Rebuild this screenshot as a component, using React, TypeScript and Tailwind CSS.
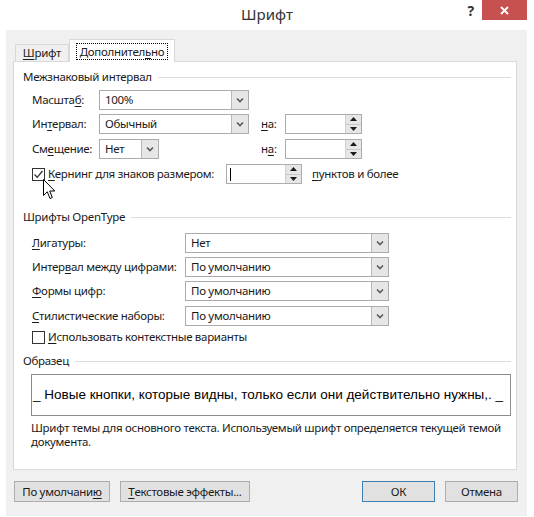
import React from "react";

const U = ({ children }: { children: React.ReactNode }) => (
  <span className="underline underline-offset-[2px] decoration-[1px]">{children}</span>
);

const Chevron = () => (
  <svg width="8" height="6" viewBox="0 0 8 6">
    <polyline points="1,1.5 4,4.5 7,1.5" fill="none" stroke="#5a5a5a" strokeWidth="1.6" />
  </svg>
);

const Select = ({ value, w }: { value: string; w: string }) => (
  <div className={`flex h-full border border-[#acacac] bg-white ${w}`}>
    <div className="flex-1 pl-[5px] flex items-center leading-none whitespace-nowrap">{value}</div>
    <div className="w-[17px] bg-[#e6e6e6] border-l border-[#b8b8b8] flex items-center justify-center">
      <Chevron />
    </div>
  </div>
);

const Spin = ({ w, caret }: { w: string; caret?: boolean }) => (
  <div className={`flex h-full border border-[#acacac] bg-white ${w}`}>
    <div className="flex-1 flex items-center pl-[3px]">
      {caret && <div className="w-px h-[13px] bg-black" />}
    </div>
    <div className="w-[16px] flex flex-col border-l border-[#d0d0d0]">
      <div className="flex-1 bg-[#e6e6e6] border-b border-[#c8c8c8] flex items-center justify-center">
        <svg width="7" height="4" viewBox="0 0 7 4"><polygon points="0,4 7,4 3.5,0" fill="#1a1a1a" /></svg>
      </div>
      <div className="flex-1 bg-[#e6e6e6] flex items-center justify-center">
        <svg width="7" height="4" viewBox="0 0 7 4"><polygon points="0,0 7,0 3.5,4" fill="#1a1a1a" /></svg>
      </div>
    </div>
  </div>
);

const Checkbox = ({ checked }: { checked?: boolean }) => (
  <div className="w-[13px] h-[13px] shrink-0 border border-[#333] bg-white flex items-center justify-center">
    {checked && (
      <svg width="11" height="11" viewBox="0 0 11 11">
        <polyline points="1.5,5.5 4.2,8.3 9.5,2" fill="none" stroke="#333" strokeWidth="1.3" />
      </svg>
    )}
  </div>
);

const Header = ({ text, mt }: { text: string; mt: string }) => (
  <div className={`flex items-center h-[16px] ${mt}`}>
    <span className="whitespace-nowrap">{text}</span>
    <div className="flex-1 h-px bg-[#dcdcdc] ml-[6px]" />
  </div>
);

const Btn = ({ children, w, def }: { children: React.ReactNode; w: string; def?: boolean }) => (
  <div
    className={`h-[21px] ${w} flex items-center justify-center whitespace-nowrap border ${
      def ? "border-[#3c7fb1] bg-[#e1e1e1]" : "border-[#adadad] bg-[#e1e1e1]"
    }`}
  >
    {children}
  </div>
);

export default function App() {
  return (
    <div
      className="relative w-[534px] h-[517px] bg-white text-[11.5px] tracking-[-0.3px] text-[#1a1a1a] overflow-hidden"
      style={{ fontFamily: '"Noto Sans", "Open Sans", sans-serif' }}
    >
      {/* title bar */}
      <div className="grid grid-cols-[1fr_auto_1fr] h-[30px]">
        <div />
        <div className="flex items-center text-[15px] tracking-normal text-[#333] pb-[1px]">Шрифт</div>
        <div className="flex justify-end items-start pr-[7px]">
          <div className="text-[14px] font-bold text-[#333] mr-[8px] mt-[2px] leading-[18px]">?</div>
          <div className="w-[45px] h-[20px] bg-[#c75050] flex items-center justify-center">
            <svg width="9" height="9" viewBox="0 0 9 9">
              <path d="M1 1 L8 8 M8 1 L1 8" stroke="#fff" strokeWidth="1.8" />
            </svg>
          </div>
        </div>
      </div>

      {/* body */}
      <div className="ml-[6px] w-[521px] h-[486px] bg-[#f0f0f0] pl-[7px] pt-[9px]">
        {/* tabs */}
        <div className="flex items-end h-[22px] relative z-10">
          <div className="ml-[2px] w-[54px] h-[17px] border border-b-0 border-[#d9d9d9] bg-[#f0f0f0] flex items-center justify-center">
            <span><U>Ш</U>рифт</span>
          </div>
          <div className="w-[106px] h-[23px] -mb-px border border-b-0 border-[#d9d9d9] bg-white flex items-center justify-center">
            <span className="border border-dotted border-black px-[3px] leading-[15px] whitespace-nowrap">
              Дополнител<U>ь</U>но
            </span>
          </div>
        </div>
        {/* panel */}
        <div className="w-[504px] h-[409px] bg-white border border-[#d9d9d9] pl-[9px] pr-[5px]">
          <Header text="Межзнаковый интервал" mt="mt-[7px]" />
          <div className="pl-[9px]">
            <div className="flex items-center h-[20px] mt-[5px]">
              <div className="w-[67px] whitespace-nowrap">Масшта<U>б</U>:</div>
              <Select value="100%" w="w-[150px]" />
            </div>
            <div className="flex items-center h-[20px] mt-[4px]">
              <div className="w-[67px] whitespace-nowrap">Ин<U>т</U>ервал:</div>
              <Select value="Обычный" w="w-[150px]" />
              <div className="ml-[12px] w-[24px]"><U>н</U>а:</div>
              <Spin w="w-[77px]" />
            </div>
            <div className="flex items-center h-[20px] mt-[5px]">
              <div className="w-[67px] whitespace-nowrap">См<U>е</U>щение:</div>
              <div className="w-[150px] h-full">
                <Select value="Нет" w="w-[60px]" />
              </div>
              <div className="ml-[12px] w-[24px]">н<U>а</U>:</div>
              <Spin w="w-[77px]" />
            </div>
            <div className="flex items-center h-[20px] mt-[5px]">
              <Checkbox checked />
              <div className="ml-[3px] w-[178px] whitespace-nowrap"><U>К</U>ернинг для знаков размером:</div>
              <Spin w="w-[76px]" caret />
              <div className="ml-[10px] whitespace-nowrap"><U>п</U>унктов и более</div>
            </div>
          </div>

          <Header text="Шрифты OpenType" mt="mt-[25px]" />
          <div className="pl-[9px]">
            {[
              ["Л", "игатуры:", "", "Нет", "mt-[8px]"],
              ["Интер", "в", "ал между цифрами:", "По умолчанию", "mt-[4px]"],
              ["Ф", "ормы цифр:", "", "По умолчанию", "mt-[4px]"],
              ["С", "тилистические наборы:", "", "По умолчанию", "mt-[5px]"],
            ].map((r, i) => (
              <div key={i} className={`flex items-center h-[20px] ${r[4]}`}>
                <div className="w-[153px] whitespace-nowrap">
                  {i === 1 ? (
                    <>
                      {r[0]}
                      <U>{r[1]}</U>
                      {r[2]}
                    </>
                  ) : (
                    <>
                      <U>{r[0]}</U>
                      {r[1]}
                    </>
                  )}
                </div>
                <Select value={r[3]} w="w-[204px]" />
              </div>
            ))}
            <div className="flex items-center h-[16px] mt-[3px]">
              <Checkbox />
              <div className="ml-[3px] whitespace-nowrap"><U>И</U>спользовать контекстные варианты</div>
            </div>
          </div>

          <Header text="Образец" mt="mt-[8px]" />
          <div
            className="ml-[8px] mt-[5px] w-[480px] h-[42px] border border-[#8c8c8c] flex items-center pl-[1px] text-[13.5px] tracking-normal text-black whitespace-nowrap overflow-hidden"
            style={{ fontFamily: '"Liberation Sans", sans-serif' }}
          >
            _ Новые кнопки, которые видны, только если они действительно нужны,. _
          </div>
          <div className="ml-[8px] mt-[5px] leading-[14px] whitespace-nowrap">
            Шрифт темы для основного текста. Используемый шрифт определяется текущей темой
            <br />
            документа.
          </div>
        </div>

        {/* buttons */}
        <div className="flex mt-[11px] ml-[1px]">
          <Btn w="w-[96px]">По умолчани<U>ю</U></Btn>
          <div className="w-[10px]" />
          <Btn w="w-[130px]"><U>Т</U>екстовые эффекты...</Btn>
          <div className="flex-1" />
          <Btn w="w-[73px]" def>ОК</Btn>
          <div className="w-[10px]" />
          <Btn w="w-[73px]">Отмена</Btn>
          <div className="w-[9px]" />
        </div>
      </div>

      {/* mouse cursor */}
      <svg className="absolute left-[43px] top-[179px]" width="13" height="21" viewBox="0 0 13 21">
        <path d="M0.5 0.5 L0.5 16.5 L4.3 12.8 L7 19.5 L9.3 18.5 L6.7 12 L11.8 12 Z" fill="#fff" stroke="#000" strokeWidth="1" strokeLinejoin="miter" />
      </svg>
    </div>
  );
}
